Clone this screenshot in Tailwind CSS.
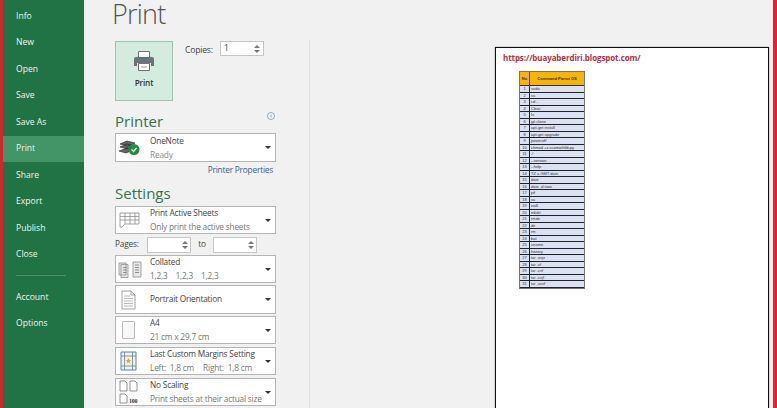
<!DOCTYPE html>
<html lang="en">
<head>
<meta charset="UTF-8">
<title>Print</title>
<script src="https://cdn.jsdelivr.net/npm/@tailwindcss/browser@4"></script>
</head>
<body class="w-[777px] h-[408px] overflow-hidden flex bg-[#f1f1f1] font-['Open_Sans',sans-serif] text-[#444]">
  <div class="w-[3px] shrink-0 bg-[#d8232a]"></div>

  <!-- sidebar -->
  <nav class="w-[81px] shrink-0 bg-[#217346] text-[#eef5f0] text-[8.6px] pt-[3px]">
    <div class="h-[26.5px] pl-[13px] flex items-center">Info</div>
    <div class="h-[26.5px] pl-[13px] flex items-center">New</div>
    <div class="h-[26.5px] pl-[13px] flex items-center">Open</div>
    <div class="h-[26.5px] pl-[13px] flex items-center">Save</div>
    <div class="h-[26.5px] pl-[13px] flex items-center">Save As</div>
    <div class="h-[26.5px] pl-[13px] flex items-center bg-[#439467]">Print</div>
    <div class="h-[26.5px] pl-[13px] flex items-center">Share</div>
    <div class="h-[26.5px] pl-[13px] flex items-center">Export</div>
    <div class="h-[26.5px] pl-[13px] flex items-center">Publish</div>
    <div class="h-[26.5px] pl-[13px] flex items-center">Close</div>
    <div class="ml-[13px] mr-[18px] mt-[7px] mb-[8px] border-t border-[#4b9068]"></div>
    <div class="h-[26.5px] pl-[13px] flex items-center">Account</div>
    <div class="h-[26.5px] pl-[13px] flex items-center">Options</div>
  </nav>

  <!-- print settings -->
  <div class="w-[225px] shrink-0 pl-[31px] text-[8.3px] tracking-[-0.2px]">
    <h1 class="h-[41px] -ml-[3px] text-[27px] leading-[27px] font-light text-[#555] tracking-[-0.8px]">Print</h1>

    <div class="flex h-[60px]">
      <div class="w-[58px] h-[60px] bg-[#d3ecdf] border border-[#9cc5ae] flex flex-col items-center pt-[9px]">
        <svg viewBox="0 0 20 20" class="w-[20px] h-[20px]">
          <path d="M4.500.5h11v7h-11z" fill="#fff" stroke="#6d7278"/>
          <path d="M2 6h16a2 2 0 0 1 2 2v7h-3v-3H3v3H0V8a2 2 0 0 1 2-2z" fill="#6d7278"/>
          <path d="M4.500 7h11" stroke="#2f7f8f"/>
          <path d="M4.500 12.500h11v7h-11z" fill="#fff" stroke="#6d7278"/>
          <path d="M7 16h6" stroke="#9aa0a5"/>
        </svg>
        <span class="mt-[6px] text-[8.3px] font-semibold text-[#333]">Print</span>
      </div>
      <span class="ml-[12px] w-[35px] mt-[3px] text-[8.6px] leading-[13px]">Copies:</span>
      <div class="w-[44px] h-[15px] bg-white border border-[#c6c6c6] flex items-center justify-between pl-[3px] pr-[3px] text-[8.6px]">
        <span>1</span>
        <div class="flex flex-col gap-[2px]">
          <div class="w-0 h-0 border-x-[3px] border-x-transparent border-b-[3px] border-b-[#777]"></div>
          <div class="w-0 h-0 border-x-[3px] border-x-transparent border-t-[3px] border-t-[#777]"></div>
        </div>
      </div>
    </div>

    <div class="w-[161px] mt-[10px] h-[22px] flex justify-between">
      <h2 class="text-[15px] leading-[21px] text-[#31734f] tracking-normal">Printer</h2>
      <svg viewBox="0 0 9 9" class="w-[8px] h-[8px] mt-[1px] mr-[1px]"><circle cx="4.500" cy="4.500" r="4" fill="none" stroke="#8aa7c4"/><path d="M4.500 3v3" stroke="#8aa7c4"/></svg>
    </div>

    <div class="w-[161px] h-[29px] bg-white border border-[#b5b5b5] flex items-center relative">
      <div class="w-[34px] pl-[3px]">
        <svg viewBox="0 0 21 15" class="w-[21px] h-[15px]">
          <path d="M1 4l7-3 8 2-7 3zM1 7l7-3 8 2-7 3zM0 11l8-3 6 2-7 3z" fill="#666" stroke="#222" stroke-width=".6"/>
          <circle cx="15" cy="9.500" r="5.500" fill="#19913e"/>
          <path d="M12.500 9.500l2 2 3-3.500" stroke="#fff" stroke-width="1.200" fill="none"/>
        </svg>
      </div>
      <div class="leading-[14px]">
        <div class="text-[#444]">OneNote</div>
        <div class="text-[#8a8a8a]">Ready</div>
      </div>
      <div class="absolute right-[4px] top-[12px] w-0 h-0 border-x-[3px] border-x-transparent border-t-[3px] border-t-[#333]"></div>
    </div>
    <div class="w-[158px] text-right leading-[12px] mt-[2px] text-[#38608a]">Printer Properties</div>

    <h2 class="text-[15px] leading-[21px] text-[#31734f] tracking-normal mt-[7px] mb-[2px]">Settings</h2>

    <div class="w-[161px] h-[28px] bg-white border border-[#b5b5b5] flex items-center relative">
      <div class="w-[34px] pl-[3px]">
        <svg viewBox="0 0 21 17" class="w-[21px] h-[17px]" fill="none" stroke="#8e8e8e" stroke-width=".8"><path d="M1 1h19v11H6l-3 3H1zM1 4.500h19M1 8h19M6 1v11M11 1v11M16 1v11"/></svg>
      </div>
      <div class="leading-[14px]">
        <div>Print Active Sheets</div>
        <div class="text-[#777]">Only print the active sheets</div>
      </div>
      <div class="absolute right-[4px] top-[12px] w-0 h-0 border-x-[3px] border-x-transparent border-t-[3px] border-t-[#333]"></div>
    </div>

    <div class="w-[161px] h-[21px] flex items-center">
      <span class="w-[32px]">Pages:</span>
      <div class="w-[44px] h-[16px] bg-white border border-[#c6c6c6] flex flex-col items-end justify-center gap-[2px] pr-[2px]">
        <div class="w-0 h-0 border-x-[3px] border-x-transparent border-b-[3px] border-b-[#777]"></div>
        <div class="w-0 h-0 border-x-[3px] border-x-transparent border-t-[3px] border-t-[#777]"></div>
      </div>
      <span class="w-[22px] text-center">to</span>
      <div class="w-[44px] h-[16px] bg-white border border-[#c6c6c6] flex flex-col items-end justify-center gap-[2px] pr-[2px]">
        <div class="w-0 h-0 border-x-[3px] border-x-transparent border-b-[3px] border-b-[#777]"></div>
        <div class="w-0 h-0 border-x-[3px] border-x-transparent border-t-[3px] border-t-[#777]"></div>
      </div>
    </div>

    <div class="w-[161px] h-[28px] bg-white border border-[#b5b5b5] flex items-center relative">
      <div class="w-[34px] pl-[2px]">
        <svg viewBox="0 0 24 17" class="w-[24px] h-[17px]" fill="#e8e8e8" stroke="#8e8e8e" stroke-width=".8"><path d="M1 2h7v12H1zM3 3.500h7v13H3zM15 1h8v15h-8z"/><path d="M5 6.500h3.500M5 9h3.500M5 11.500h3.500M17 4h4M17 6.500h4M17 9h4M17 11.500h4" stroke="#777"/></svg>
      </div>
      <div class="leading-[14px]">
        <div>Collated</div>
        <div class="text-[#777] flex gap-[8px]"><span>1,2,3</span><span>1,2,3</span><span>1,2,3</span></div>
      </div>
      <div class="absolute right-[4px] top-[12px] w-0 h-0 border-x-[3px] border-x-transparent border-t-[3px] border-t-[#333]"></div>
    </div>

    <div class="w-[161px] h-[29px] mt-[2px] bg-white border border-[#b5b5b5] flex items-center relative">
      <div class="w-[34px] pl-[5px]">
        <svg viewBox="0 0 15 20" class="w-[15px] h-[20px]" fill="none" stroke="#8e8e8e" stroke-width=".8"><path d="M1 1h9l4 4v14H1zM10 1v4h4"/><path d="M3 6h6M3 8.500h9M3 11h9M3 13.500h9M3 16h9" stroke="#aaa"/></svg>
      </div>
      <div>Portrait Orientation</div>
      <div class="absolute right-[4px] top-[12px] w-0 h-0 border-x-[3px] border-x-transparent border-t-[3px] border-t-[#333]"></div>
    </div>

    <div class="w-[161px] h-[28px] mt-[2px] bg-white border border-[#b5b5b5] flex items-center relative">
      <div class="w-[34px] pl-[6px]">
        <div class="w-[13px] h-[18px] rounded-[1px] border border-[#bbb] bg-[#f8f8f8]"></div>
      </div>
      <div class="leading-[14px]">
        <div>A4</div>
        <div class="text-[#777]">21 cm x 29,7 cm</div>
      </div>
      <div class="absolute right-[4px] top-[12px] w-0 h-0 border-x-[3px] border-x-transparent border-t-[3px] border-t-[#333]"></div>
    </div>

    <div class="w-[161px] h-[28px] mt-[3px] bg-white border border-[#b5b5b5] flex items-center relative">
      <div class="w-[34px] pl-[4px]">
        <svg viewBox="0 0 17 20" class="w-[17px] h-[20px]"><path d="M1 1h15v18H1z" fill="#f6f0dc" stroke="#5d86a6"/><path d="M1 5h15M1 15h15M4.500 1v18M12.500 1v18" stroke="#5d86a6" stroke-width=".8"/><path d="M8.500 7l.9 2h2l-1.600 1.300.6 2.100-1.900-1.200-1.900 1.200.6-2.100L5.600 9h2z" fill="#d9a83f"/></svg>
      </div>
      <div class="leading-[14px]">
        <div class="whitespace-nowrap">Last Custom Margins Setting</div>
        <div class="text-[#777] flex gap-[9px]"><span>Left:&nbsp; 1,8 cm</span><span>Right:&nbsp; 1,8 cm</span></div>
      </div>
      <div class="absolute right-[4px] top-[12px] w-0 h-0 border-x-[3px] border-x-transparent border-t-[3px] border-t-[#333]"></div>
    </div>

    <div class="w-[161px] h-[28px] mt-[3px] bg-white border border-[#b5b5b5] flex items-center relative">
      <div class="w-[34px] pl-[3px]">
        <svg viewBox="0 0 24 24" class="w-[24px] h-[24px]" fill="none" stroke="#777" stroke-width=".8"><path d="M1 1h5l2 2v8H1zM11 1h5l2 2v8h-7zM1 14h5l2 2v7H1z"/><text x="10" y="23" font-size="6" font-weight="700" fill="#333" stroke="none" font-family="Liberation Serif">100</text></svg>
      </div>
      <div class="leading-[14px]">
        <div>No Scaling</div>
        <div class="text-[#777] whitespace-nowrap">Print sheets at their actual size</div>
      </div>
      <div class="absolute right-[4px] top-[12px] w-0 h-0 border-x-[3px] border-x-transparent border-t-[3px] border-t-[#333]"></div>
    </div>
  </div>

  <!-- divider -->
  <div class="w-px shrink-0 mt-[40px] bg-[#dcdcdc]"></div>

  <!-- preview -->
  <div class="flex-1 pl-[185px] pt-[47px]">
    <div class="w-[274px] h-[361px] bg-white border border-b-0 border-[#111] shadow-[0_0_1px_#555] pl-[7px] pt-[4px]">
      <p class="text-[8px] leading-[12px] font-bold tracking-[-0.1px] text-[#bf2b45]">https://buayaberdiri.blogspot.com/</p>
      <div class="ml-[16px] mt-[7px] w-[66px] font-['Liberation_Sans',sans-serif] text-[4px] text-[#333] border border-[#777]">
        <div class="flex h-[14px] bg-[#f7b500] font-bold items-center border-b border-[#333]">
          <span class="w-[9px] text-center">No</span>
          <span class="flex-1 h-full border-l border-[#333] flex items-center justify-center">Command Parrot OS</span>
        </div>
        <div id="rows"></div>
      </div>
    </div>
  </div>

  <div class="w-[4px] shrink-0 bg-[#ed1c2e]"></div>

  <script>
    const cmds = ["sudo","su","cd ..","Clear","ls","git clone","apt-get install","apt-get upgrade","poweroff","chmod +x ccomothlib.py","./","--version","--help","TZ = GMT date","date","date -d now","pif","su","wall","mkdir","rmdir","dir","rm","bat","uname","history","tar -xvjz","tar -xf","tar -cvf","tar -cvjf","tar -xzvf"];
    document.getElementById("rows").innerHTML = cmds.map((c, i) => `
      <div class="flex h-[6.5px] leading-[5.5px] bg-[#d9e1f2] border-b border-[#222]">
        <span class="w-[9px] text-center">${i + 1}</span>
        <span class="flex-1 border-l border-[#222] pl-[1px]">${c}</span>
      </div>`).join("");
  </script>
</body>
</html>
